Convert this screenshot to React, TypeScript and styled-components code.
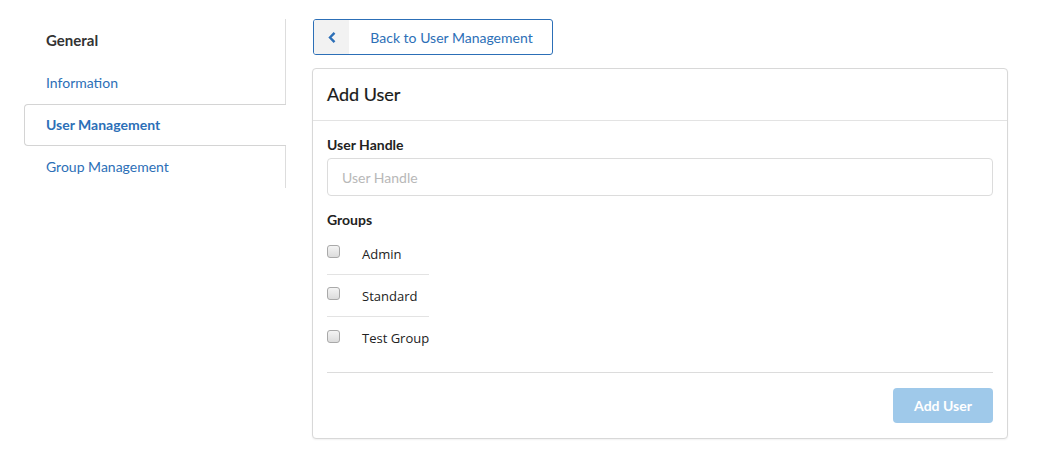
import React, { useState } from 'react';
import styled, { createGlobalStyle } from 'styled-components';

const GlobalStyle = createGlobalStyle`
  html, body {
    margin: 0;
    padding: 0;
    background: #fff;
    font-family: Lato, "Open Sans", sans-serif;
    color: #333;
  }
  * { box-sizing: border-box; }
`;

const Page = styled.div`
  display: flex;
  align-items: flex-start;
  padding: 19px 0 0 24px;
  width: 1044px;
  height: 458px;
`;

const Sidebar = styled.nav`
  width: 262px;
  flex: none;
  display: flex;
  flex-direction: column;
  border-right: 1px solid #ddd;
`;

const SideHeading = styled.div`
  font-size: 15px;
  font-weight: 700;
  color: #333;
  padding: 12px 0 13px 22px;
  line-height: 18px;
`;

const SideItem = styled.a<{ $active?: boolean }>`
  display: block;
  height: 42px;
  line-height: 40px;
  padding-left: 21px;
  font-size: 14px;
  color: #2c6fb7;
  text-decoration: none;
  font-weight: ${(p) => (p.$active ? 700 : 400)};
  border: 1px solid ${(p) => (p.$active ? '#d4d4d4' : 'transparent')};
  border-right: none;
  border-radius: 4px 0 0 4px;
  margin-right: ${(p) => (p.$active ? '-1px' : '0')};
  background: #fff;
  position: relative;
`;

const Main = styled.main`
  flex: none;
  margin-left: 26px;
  width: 696px;
  display: flex;
  flex-direction: column;
  gap: 13px;
`;

const BackButton = styled.button`
  display: flex;
  align-items: stretch;
  width: 240px;
  height: 36px;
  margin-left: 1px;
  padding: 0;
  border: 1px solid #2c6fb7;
  border-radius: 3px;
  background: #fff;
  overflow: hidden;
  cursor: pointer;
  font-family: inherit;
`;

const BackIcon = styled.span`
  width: 35px;
  flex: none;
  background: #f2f2f2;
  display: flex;
  align-items: center;
  justify-content: center;
  color: #2c6fb7;
`;

const BackText = styled.span`
  flex: 1;
  display: flex;
  align-items: center;
  justify-content: center;
  padding-left: 2px;
  font-size: 14px;
  color: #2c6fb7;
`;

const Card = styled.section`
  border: 1px solid #d8d8d8;
  border-radius: 4px;
  background: #fff;
  box-shadow: 0 1px 2px rgba(0, 0, 0, 0.06);
`;

const CardHeader = styled.div`
  height: 52px;
  padding: 0 14px 2px 14px;
  display: flex;
  align-items: center;
  border-bottom: 1px solid #e3e3e3;
`;

const CardTitle = styled.h2`
  margin: 0;
  font-size: 18px;
  font-weight: 400;
  color: #1a1a1a;
  -webkit-text-stroke: 0.2px #1a1a1a;
`;

const CardBody = styled.div`
  padding: 15px 14px 15px 14px;
`;

const Label = styled.label`
  display: block;
  font-size: 14px;
  font-weight: 700;
  color: #222;
  line-height: 18px;
  margin-bottom: 4px;
`;

const TextInput = styled.input`
  display: block;
  width: 100%;
  height: 38px;
  border: 1px solid #dcdcdc;
  border-radius: 4px;
  padding: 0 14px;
  font-family: inherit;
  font-size: 14px;
  color: #333;
  outline: none;
  margin-bottom: 15px;
  &::placeholder {
    color: #b8b8b8;
  }
`;

const GroupList = styled.div`
  width: 102px;
  margin-top: 2px;
`;

const GroupRow = styled.label<{ $last?: boolean }>`
  display: flex;
  align-items: center;
  height: 42px;
  border-bottom: ${(p) => (p.$last ? 'none' : '1px solid #e3e3e3')};
  cursor: pointer;
  white-space: nowrap;
`;

const Box = styled.span<{ $checked: boolean }>`
  width: 13px;
  height: 13px;
  flex: none;
  border: 1px solid #a9a9a9;
  border-radius: 3px;
  background: ${(p) => (p.$checked ? '#2c6fb7' : 'linear-gradient(#f4f4f4, #dcdcdc)')};
  margin-top: -4px;
`;

const GroupName = styled.span`
  margin-left: 22px;
  font-family: "Open Sans", sans-serif;
  font-size: 13px;
  color: #222;
`;

const Divider = styled.hr`
  border: none;
  border-top: 1px solid #dcdcdc;
  margin: 13px 0 15px 0;
`;

const Footer = styled.div`
  display: flex;
  justify-content: flex-end;
`;

const SubmitButton = styled.button`
  width: 100px;
  height: 35px;
  border: none;
  border-radius: 4px;
  background: #9fc9ea;
  color: #fff;
  font-family: inherit;
  font-size: 14px;
  font-weight: 700;
  cursor: not-allowed;
`;

const groups = ['Admin', 'Standard', 'Test Group'];

const App = () => {
  const [handle, setHandle] = useState('');
  const [checked, setChecked] = useState<string[]>([]);
  const toggle = (g: string) =>
    setChecked((c) => (c.includes(g) ? c.filter((x) => x !== g) : [...c, g]));

  return (
    <>
      <GlobalStyle />
      <Page>
        <Sidebar>
          <SideHeading>General</SideHeading>
          <SideItem href="#">Information</SideItem>
          <SideItem href="#" $active>
            User Management
          </SideItem>
          <SideItem href="#">Group Management</SideItem>
        </Sidebar>
        <Main>
          <BackButton>
            <BackIcon>
              <svg width="10" height="13" viewBox="0 0 10 13">
                <path d="M7.5 1.8 L3 6.5 L7.5 11.2" fill="none" stroke="currentColor" strokeWidth="2.4" />
              </svg>
            </BackIcon>
            <BackText>Back to User Management</BackText>
          </BackButton>
          <Card>
            <CardHeader>
              <CardTitle>Add User</CardTitle>
            </CardHeader>
            <CardBody>
              <Label htmlFor="handle">User Handle</Label>
              <TextInput
                id="handle"
                placeholder="User Handle"
                value={handle}
                onChange={(e) => setHandle(e.target.value)}
              />
              <Label>Groups</Label>
              <GroupList>
                {groups.map((g, i) => (
                  <GroupRow key={g} $last={i === groups.length - 1} onClick={() => toggle(g)}>
                    <Box $checked={checked.includes(g)} />
                    <GroupName>{g}</GroupName>
                  </GroupRow>
                ))}
              </GroupList>
              <Divider />
              <Footer>
                <SubmitButton disabled={!handle}>Add User</SubmitButton>
              </Footer>
            </CardBody>
          </Card>
        </Main>
      </Page>
    </>
  );
};

export default App;
